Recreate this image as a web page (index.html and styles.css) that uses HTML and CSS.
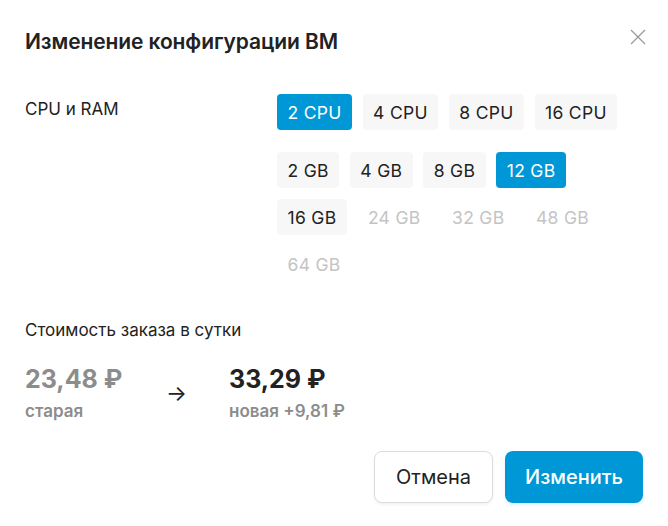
FILE: index.html
```html
<!DOCTYPE html>
<html>
<head>
	<title>Изменение конфигурации ВМ</title>

	<link rel="stylesheet" href="styles.css">
</head>
<body>

	<div class="modal">
		<div class="modal-head">
			<h2 class="modal-title">Изменение конфигурации ВМ</h2>
			<button class="modal-close" type="button" aria-label="Закрыть">
				<svg width="16" height="16" viewBox="0 0 16 16">
					<path d="M1 1L15 15M15 1L1 15" stroke="#9a9a9a" stroke-width="1.3" fill="none"/>
				</svg>
			</button>
		</div>

		<div class="config">
			<div class="config-label">CPU и RAM</div>
			<div class="config-options">
				<div class="chips">
					<button class="chip chip-active" type="button">2 CPU</button>
					<button class="chip" type="button">4 CPU</button>
					<button class="chip" type="button">8 CPU</button>
					<button class="chip" type="button">16 CPU</button>
				</div>
				<div class="chips">
					<button class="chip" type="button">2 GB</button>
					<button class="chip" type="button">4 GB</button>
					<button class="chip" type="button">8 GB</button>
					<button class="chip chip-active" type="button">12 GB</button>
					<button class="chip" type="button">16 GB</button>
					<button class="chip" type="button" disabled>24 GB</button>
					<button class="chip" type="button" disabled>32 GB</button>
					<button class="chip" type="button" disabled>48 GB</button>
					<button class="chip" type="button" disabled>64 GB</button>
				</div>
			</div>
		</div>

		<div class="cost">
			<div class="cost-label">Стоимость заказа в сутки</div>
			<div class="cost-row">
				<div class="price price-old">
					<div class="price-value">23,48 ₽</div>
					<div class="price-note">старая</div>
				</div>
				<div class="cost-arrow">→</div>
				<div class="price">
					<div class="price-value">33,29 ₽</div>
					<div class="price-note">новая +9,81 ₽</div>
				</div>
			</div>
		</div>

		<div class="modal-actions">
			<button class="btn btn-secondary" type="button">Отмена</button>
			<button class="btn btn-primary" type="button">Изменить</button>
		</div>
	</div>

</body>
</html>
```

FILE: styles.css
```css
body {
	margin: 0;
	background: #fff;
	font-family: Inter, "Noto Sans", sans-serif;
	color: #222;
}

.modal {
	width: 668px;
	padding: 27px 25px 23px;
	box-sizing: border-box;
}

.modal-head {
	display: flex;
	justify-content: space-between;
	align-items: flex-start;
}

.modal-title {
	margin: 0;
	font-size: 21px;
	font-weight: 600;
	line-height: 30px;
	letter-spacing: -0.1px;
	color: #222;
}

.modal-close {
	border: 0;
	padding: 0;
	margin: 2px -3px 0 0;
	background: none;
	cursor: pointer;
	width: 16px;
	height: 16px;
}

.config {
	display: flex;
	margin-top: 37px;
}

.config-label {
	width: 252px;
	font-size: 17px;
	line-height: 36px;
	margin-top: -3px;
}

.config-options {
	display: flex;
	flex-direction: column;
	gap: 22px;
	width: 341px;
}

.chips {
	display: flex;
	flex-wrap: wrap;
	gap: 11px 10.5px;
}

.chip {
	height: 36px;
	padding: 0 10.5px;
	border: 0;
	border-radius: 4px;
	background: #f7f7f7;
	font-family: inherit;
	font-size: 17.5px;
	letter-spacing: 0.3px;
	color: #222;
	cursor: pointer;
}

.chip-active {
	background: #0097d6;
	color: #fff;
}

.chip[disabled] {
	background: none;
	color: #c4c4c4;
	cursor: default;
}

.cost {
	margin-top: 37px;
}

.cost-label {
	font-size: 17px;
	line-height: 22px;
}

.cost-row {
	display: flex;
	align-items: flex-start;
	margin-top: 22px;
}

.price-value {
	font-size: 25px;
	font-weight: 700;
	line-height: 32px;
	color: #222;
}

.price-note {
	margin-top: 6px;
	font-size: 17px;
	font-weight: 600;
	line-height: 20px;
	color: #8c8c8c;
}

.price-old {
	width: 141px;
}

.price-old .price-value {
	color: #8c8c8c;
}

.cost-arrow {
	width: 63px;
	margin-top: 18px;
	font-size: 22px;
	line-height: 24px;
	color: #222;
}

.modal-actions {
	display: flex;
	justify-content: flex-end;
	gap: 12px;
	margin-top: 30px;
}

.btn {
	height: 52px;
	border-radius: 8px;
	font-family: inherit;
	font-size: 20px;
	cursor: pointer;
}

.btn-secondary {
	width: 119px;
	background: #fff;
	border: 1px solid #dcdcdc;
	color: #222;
	box-shadow: 0 2px 3px rgba(0, 0, 0, 0.05);
}

.btn-primary {
	width: 138px;
	background: #0097d6;
	border: 0;
	color: #fff;
	font-weight: 500;
	box-shadow: 0 2px 4px rgba(0, 151, 214, 0.12);
}
```
